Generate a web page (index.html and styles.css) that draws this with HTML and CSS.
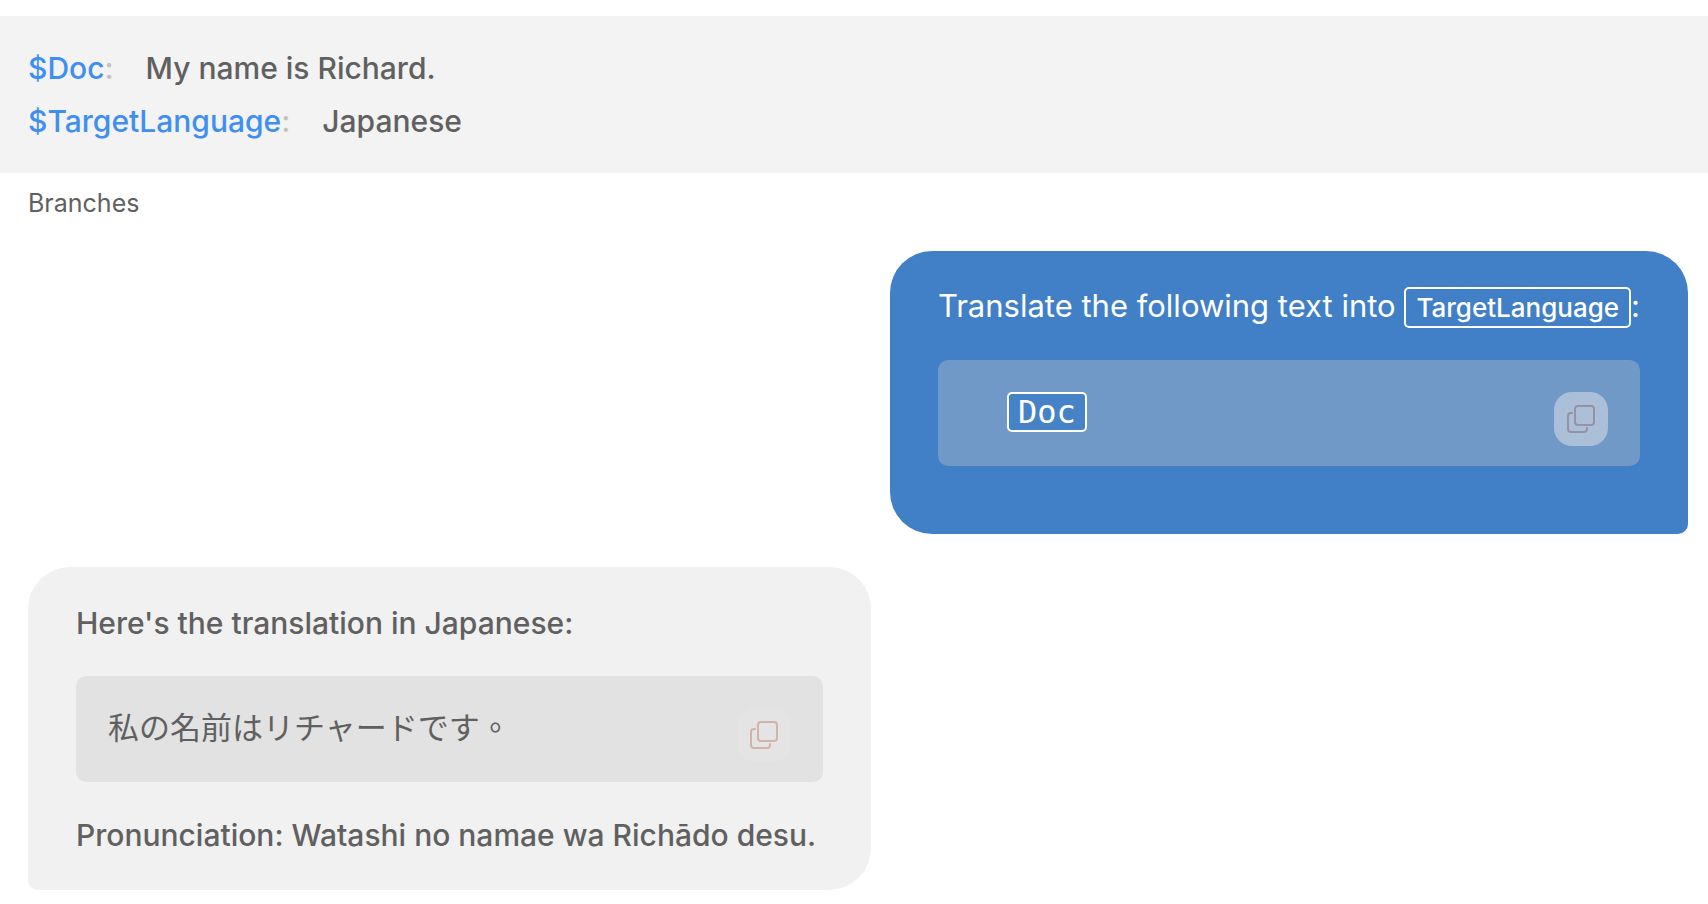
FILE: index.html
```html
<!DOCTYPE html>
<html lang="en">
<head>
<meta charset="utf-8">
<title>Translation prompt</title>
<link rel="stylesheet" href="styles.css">
</head>
<body>
<header class="variables">
  <div class="variable"><span class="variable-name">$Doc</span><span class="variable-colon">:</span><span class="variable-value">My name is Richard.</span></div>
  <div class="variable"><span class="variable-name">$TargetLanguage</span><span class="variable-colon">:</span><span class="variable-value">Japanese</span></div>
</header>
<main class="thread">
  <h2 class="branches">Branches</h2>
  <section class="bubble bubble-user">
    <p class="text">Translate the following text into <span class="tag">TargetLanguage</span>:</p>
    <div class="code code-user">
      <code class="code-text code-indent"><span class="tag tag-mono">Doc</span></code>
      <button class="copy copy-user" type="button" aria-label="Copy">
        <svg class="copy-icon" viewBox="0 0 28 28" aria-hidden="true"><rect x="8" y="1" width="19" height="19" rx="3"/><path d="M5 8H4a3 3 0 0 0-3 3v13a3 3 0 0 0 3 3h13a3 3 0 0 0 3-3v-1"/></svg>
      </button>
    </div>
  </section>
  <section class="bubble bubble-reply">
    <p class="text">Here's the translation in Japanese:</p>
    <div class="code code-reply">
      <code class="code-text" lang="zh-Hant">私の名前はリチャードです。</code>
      <button class="copy copy-reply" type="button" aria-label="Copy">
        <svg class="copy-icon" viewBox="0 0 28 28" aria-hidden="true"><rect x="8" y="1" width="19" height="19" rx="3"/><path d="M5 8H4a3 3 0 0 0-3 3v13a3 3 0 0 0 3 3h13a3 3 0 0 0 3-3v-1"/></svg>
      </button>
    </div>
    <p class="text">Pronunciation: Watashi no namae wa Richādo desu.</p>
  </section>
</main>
</body>
</html>
```
FILE: styles.css
```css
* {
  box-sizing: border-box;
}

body {
  margin: 0;
  padding-top: 16px;
  background: #fff;
  color: #606060;
  font-family: Inter, "Noto Sans CJK TC", sans-serif;
  font-size: 30px;
  font-weight: 500;
  line-height: 42px;
}

.variables {
  padding: 26px 28px 25px;
  background: #f3f3f3;
}

.variable {
  line-height: 53px;
}

.variable-name {
  color: #3f8ff0;
}

.variable-colon {
  margin-right: 32px;
  color: #c2c2c2;
}

.thread {
  display: flex;
  flex-direction: column;
  padding: 14px 20px 14px 28px;
}

.branches {
  margin: 0 0 32px;
  font-size: 25px;
  font-weight: 400;
  line-height: 32px;
}

.bubble {
  display: flex;
  flex-direction: column;
  gap: 32px;
  padding: 35px 48px 34px;
  border-radius: 42px;
}

.bubble-user {
  align-self: flex-end;
  gap: 33px;
  margin-bottom: 33px;
  padding: 34px 48px 68px;
  border-bottom-right-radius: 10px;
  background: #417fc7;
  color: #fff;
  font-size: 31px;
  font-weight: 400;
}

.bubble-reply {
  align-self: flex-start;
  min-width: min(843px, 100%);
  border-bottom-left-radius: 10px;
  background: #f1f1f1;
}

.text {
  margin: 0;
}

.tag {
  display: inline-block;
  margin: -4px 0;
  padding: 0 10px;
  border: 2px solid #fff;
  border-radius: 5px;
  font-size: 26px;
  font-weight: 500;
  line-height: 37px;
}

.tag-mono {
  padding: 0 9px;
  background: #4583c6;
  font-size: 32px;
  line-height: 36px;
}

.code {
  display: flex;
  align-items: flex-start;
  justify-content: space-between;
  padding: 32px 32px 20px;
  border-radius: 10px;
}

.code-user {
  background: #7099c7;
}

.code-reply {
  background: #e2e2e2;
}

.code-text {
  font-family: "DejaVu Sans Mono", "Noto Sans CJK TC", monospace;
  line-height: 40px;
}

.code-reply .code-text {
  font-family: "Noto Sans CJK TC", sans-serif;
  font-size: 31px;
  font-weight: 400;
  line-height: 36px;
}

.code-indent {
  padding-left: 37px;
}

.copy {
  display: grid;
  place-items: center;
  width: 54px;
  height: 54px;
  padding: 0;
  border: 0;
  border-radius: 18px;
}

.copy-user {
  background: #abbfd8;
  color: #9593a3;
}

.copy-reply {
  background: #e4e4e4;
  color: #d0b4a9;
}

.copy-icon {
  width: 28px;
  height: 28px;
  fill: none;
  stroke: currentColor;
  stroke-width: 2;
  stroke-linecap: round;
}
```
